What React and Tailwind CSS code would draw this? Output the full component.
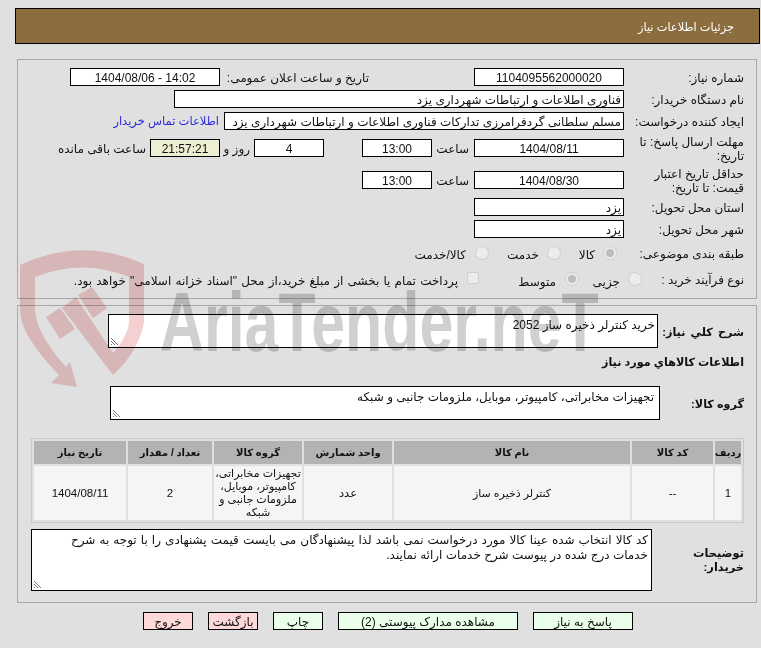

function Box({ w, className = "bg-white", children }) {
  return (
    <div className={`h-[18px] shrink-0 border border-black flex items-center justify-center pt-[1px] text-[12px] leading-none overflow-hidden whitespace-nowrap ${w} ${className}`}>
      {children}
    </div>
  );
}

function Label({ w = "w-[120px]", children }) {
  return <div className={`${w} shrink-0 pt-[2px] text-[12px] leading-[14px]`}>{children}</div>;
}

function Radio({ on }) {
  return (
    <span className="w-[14px] h-[14px] -mt-[1px] rounded-full border border-[#cfcfcf] bg-[#ececec] flex items-center justify-center shrink-0">
      {on && <span className="w-[8px] h-[8px] rounded-full bg-[#bdbdbd]" />}
    </span>
  );
}

function Grip() {
  return (
    <svg width="9" height="9" viewBox="0 0 9 9" className="absolute left-[1px] bottom-[1px]">
      <path d="M1 1L8 8M1 4L5 8M1 7L2 8" stroke="#777" strokeWidth="1" fill="none" />
    </svg>
  );
}

function Area({ className = "", children }) {
  return <div className={`relative shrink-0 bg-white border border-black text-[12px] leading-[14.5px] pt-[3px] ${className}`}>{children}<Grip /></div>;
}

function Btn({ w, red, children }) {
  return (
    <div className={`h-[18px] border border-black flex items-center justify-center pt-[1px] text-[12px] leading-none ${w} ${red ? "bg-[#ffd9d9]" : "bg-[#eaffea]"}`}>
      {children}
    </div>
  );
}

function Th({ w, children }) {
  return <div className={`h-[23px] bg-[#b3b3b3] flex items-center justify-center text-[10px] font-bold shrink-0 whitespace-nowrap ${w}`}>{children}</div>;
}
function Td({ w, children, className = "text-[11.5px]" }) {
  return <div className={`bg-[#f5f5f5] flex items-center justify-center text-center leading-[13px] shrink-0 ${w} ${className}`}>{children}</div>;
}

function Watermark() {
  return (
    <div className="absolute inset-0 pointer-events-none mix-blend-multiply" dir="ltr">
      <svg width="126" height="140" viewBox="20 250 126 140" className="absolute left-[20px] top-[250px]">
        <path
          d="M77 387L51 383L59 375Q20 335 20 310L20 265Q82 236 144 264L144 323Q138 352 113 375L62 308L76 297L113 353Q129 335 129 320L129 277Q82 258 35 277L35 310Q37 335 66 367L70 362Z"
          fill="#f4d0d0"
        />
        <path d="M46 317L60 308L75 329L60 339Z" fill="#f4d0d0" />
        <path d="M78 295L92 287L107 308L93 318Z" fill="#f4d0d0" />
      </svg>
      <div className="absolute left-[160px] top-[280px] font-['Liberation_Sans',sans-serif] font-bold text-[#d0d0d0] text-[84px] leading-none whitespace-nowrap origin-left scale-x-[0.725]">
        AriaTender.neT
      </div>
    </div>
  );
}

export default function App() {
  return (
    <div dir="rtl" className="relative w-[761px] h-[648px] overflow-hidden bg-[#e0e0e0] text-[#111] font-['Liberation_Sans','DejaVu_Sans',sans-serif]">
      <div className="pt-[8px] pr-[1px] pl-[15px]">
        <div className="h-[36px] bg-[#8c6d40] border border-black flex items-center pt-[3px] pr-[25px] text-[11.4px] text-white">جزئیات اطلاعات نیاز</div>
      </div>

      <div className="ml-[17px] mr-[4px] mt-[15px] h-[240px] border border-[#a8a8a8] pt-[6px] pr-[12px]">
        <div className="flex items-center h-[22px]">
          <Label>شماره نیاز:</Label>
          <Box w="w-[150px]">1104095562000020</Box>
          <div className="w-[105px] shrink-0" />
          <div className="w-[149px] shrink-0 pt-[2px] text-[12px] whitespace-nowrap">تاریخ و ساعت اعلان عمومی:</div>
          <Box w="w-[150px]"><bdi dir="ltr">1404/08/06 - 14:02</bdi></Box>
        </div>
        <div className="flex items-center h-[22px]">
          <Label>نام دستگاه خریدار:</Label>
          <Box w="w-[450px]" className="bg-white justify-start pr-[2px] text-[11.5px]">فناوری اطلاعات و ارتباطات شهرداری یزد</Box>
        </div>
        <div className="flex items-center h-[22px]">
          <Label>ایجاد کننده درخواست:</Label>
          <Box w="w-[400px]" className="bg-white justify-start pr-[2px] text-[11.65px]">مسلم سلطانی گردفرامرزی تدارکات فناوری اطلاعات و ارتباطات شهرداری یزد</Box>
          <div className="text-[11.5px] pt-[1px] text-[#2a2ae0] mr-[5px] whitespace-nowrap">اطلاعات تماس خریدار</div>
        </div>
        <div className="flex items-center h-[32px]">
          <Label>مهلت ارسال پاسخ: تا تاریخ:</Label>
          <Box w="w-[150px]">1404/08/11</Box>
          <div className="w-[37px] mr-[5px] pt-[1px] shrink-0 text-[12px]">ساعت</div>
          <Box w="w-[70px]">13:00</Box>
          <div className="w-[38px] shrink-0" />
          <Box w="w-[70px]">4</Box>
          <div className="w-[30px] mr-[4px] pt-[1px] shrink-0 text-[12px] whitespace-nowrap">روز و</div>
          <Box w="w-[70px]" className="bg-[#eeeed2]">21:57:21</Box>
          <div className="text-[12px] mr-[4px] pt-[1px] whitespace-nowrap">ساعت باقی مانده</div>
        </div>
        <div className="flex items-center h-[32px]">
          <Label>حداقل تاریخ اعتبار قیمت: تا تاریخ:</Label>
          <Box w="w-[150px]">1404/08/30</Box>
          <div className="w-[37px] mr-[5px] pt-[1px] shrink-0 text-[12px]">ساعت</div>
          <Box w="w-[70px]">13:00</Box>
        </div>
        <div className="flex items-center h-[22px]">
          <Label>استان محل تحویل:</Label>
          <Box w="w-[150px]" className="bg-white justify-start pr-[2px]">یزد</Box>
        </div>
        <div className="flex items-center h-[22px]">
          <Label>شهر محل تحویل:</Label>
          <Box w="w-[150px]" className="bg-white justify-start pr-[2px]">یزد</Box>
        </div>
        <div className="flex items-center h-[26px] text-[12px]">
          <Label>طبقه بندی موضوعی:</Label>
          <span className="w-[7px] shrink-0" />
          <Radio on />
          <span className="w-[34px] mr-[8px] mt-[4px] shrink-0">کالا</span>
          <Radio />
          <span className="w-[50px] mr-[8px] mt-[4px] shrink-0">خدمت</span>
          <Radio />
          <span className="mr-[9px] mt-[4px]">کالا/خدمت</span>
        </div>
        <div className="flex items-center h-[26px] text-[12px]">
          <Label w="w-[102px]">نوع فرآیند خرید :</Label>
          <Radio />
          <span className="w-[41px] mr-[8px] mt-[5px] shrink-0">جزیی</span>
          <Radio on />
          <span className="w-[77px] mr-[9px] mt-[5px] shrink-0">متوسط</span>
          <span className="w-[12px] h-[12px] -mt-[2px] border border-[#cfcfcf] rounded-[2px] bg-[#ececec] shrink-0" />
          <span className="mr-[9px] mt-[3px] whitespace-nowrap [word-spacing:0.85px]">پرداخت تمام یا بخشی از مبلغ خرید،از محل "اسناد خزانه اسلامی" خواهد بود.</span>
        </div>
      </div>

      <div className="ml-[17px] mr-[4px] mt-[6px] h-[298px] border border-[#a8a8a8] pt-[8px] pr-[12px]">
        <div className="flex items-center h-[34px]">
          <div className="w-[86px] shrink-0 pt-[2px] text-[11.2px] font-bold whitespace-nowrap [word-spacing:2px]">شرح کلي نياز:</div>
          <Area className="w-[550px] h-[34px] pr-[2px] text-[11.8px]">خرید کنترلر ذخیره ساز 2052</Area>
        </div>
        <div className="text-[11.2px] font-bold h-[16px] mt-[6px] leading-[16px]">اطلاعات كالاهاي مورد نياز</div>
        <div className="flex items-center h-[34px] mt-[16px]">
          <div className="w-[84px] shrink-0 pt-[2px] text-[11.2px] font-bold">گروه کالا:</div>
          <Area className="w-[550px] h-[34px] pr-[5px]">تجهیزات مخابراتی، کامپیوتر، موبایل، ملزومات جانبی و شبکه</Area>
        </div>
        <div className="w-[713px] mt-[18px] border border-[#c8c8c8] p-[2px] flex flex-col gap-[2px]">
          <div className="flex gap-[2px]">
            <Th w="w-[26px]">ردیف</Th>
            <Th w="w-[81px]">کد کالا</Th>
            <Th w="w-[236px]">نام کالا</Th>
            <Th w="w-[88px]">واحد شمارش</Th>
            <Th w="w-[88px]">گروه کالا</Th>
            <Th w="w-[84px]">تعداد / مقدار</Th>
            <Th w="w-[92px]">تاریخ نیاز</Th>
          </div>
          <div className="flex gap-[2px] h-[54px]">
            <Td w="w-[26px]">1</Td>
            <Td w="w-[81px]">--</Td>
            <Td w="w-[236px]" className="text-[11px]">کنترلر ذخیره ساز</Td>
            <Td w="w-[88px]" className="text-[11.5px]">عدد</Td>
            <Td w="w-[88px]" className="text-[11px]">تجهیزات مخابراتی، کامپیوتر، موبایل، ملزومات جانبی و شبکه</Td>
            <Td w="w-[84px]">2</Td>
            <Td w="w-[92px]">1404/08/11</Td>
          </div>
        </div>
        <div className="flex items-center mt-[6px]">
          <div className="w-[92px] shrink-0 pl-[38px] text-[11.4px] font-bold leading-[14px]">توضیحات خریدار:</div>
          <Area className="w-[621px] h-[62px] pr-[3px]">
            <span className="block whitespace-nowrap [word-spacing:0.75px]">کد کالا انتخاب شده عینا کالا مورد درخواست نمی باشد لذا پیشنهادگان می بایست قیمت پشنهادی را با توجه به شرح</span>
            <span className="block whitespace-nowrap">خدمات درج شده در پیوست شرح خدمات ارائه نمایند.</span>
          </Area>
        </div>
      </div>

      <div className="flex gap-[15px] mr-[128px] mt-[9px]">
        <Btn w="w-[100px]">پاسخ به نیاز</Btn>
        <Btn w="w-[180px]">مشاهده مدارک پیوستی (2)</Btn>
        <Btn w="w-[50px]">چاپ</Btn>
        <Btn w="w-[50px]" red>بازگشت</Btn>
        <Btn w="w-[50px]" red>خروج</Btn>
      </div>

      <Watermark />
    </div>
  );
}
